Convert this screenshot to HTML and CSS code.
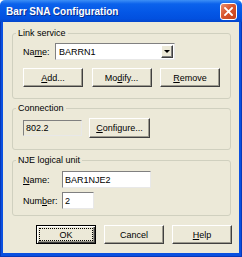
FILE: index.html
```html
<!DOCTYPE html>
<html lang="en">
<head>
  <meta charset="UTF-8" />
  <title>Barr SNA Configuration</title>
  <link rel="stylesheet" href="styles.css">
</head>
<body>

  <div class="window">
    <div class="titlebar">
      <span class="title">Barr SNA Configuration</span>
      <div class="close">
        <svg width="9" height="9" viewBox="0 0 9 9"><path d="M1 1 L8 8 M8 1 L1 8" stroke="#fff" stroke-width="1.8" stroke-linecap="square"/></svg>
      </div>
    </div>

    <div class="frame">
      <div class="client">

        <fieldset class="group group-link">
          <legend>Link service</legend>
          <div class="row">
            <span class="label">Na<u>m</u>e:</span>
            <div class="combo">
              <span class="combo-text">BARRN1</span>
              <div class="drop"><span class="tri"></span></div>
            </div>
          </div>
          <div class="row buttons">
            <div class="btn"><u>A</u>dd...</div>
            <div class="btn">Mo<u>d</u>ify...</div>
            <div class="btn"><u>R</u>emove</div>
          </div>
        </fieldset>

        <fieldset class="group group-conn">
          <legend>Connection</legend>
          <div class="row conn">
            <div class="edit static">802.2</div>
            <div class="btn btn-wide"><u>C</u>onfigure...</div>
          </div>
        </fieldset>

        <fieldset class="group group-nje">
          <legend>NJE logical unit</legend>
          <div class="row">
            <span class="label label-nje"><u>N</u>ame:</span>
            <div class="edit edit-name">BAR1NJE2</div>
          </div>
          <div class="row row-num">
            <span class="label label-nje">Num<u>b</u>er:</span>
            <div class="edit edit-num">2</div>
          </div>
        </fieldset>

        <div class="actions">
          <div class="btn btn-default"><span class="focus">OK</span></div>
          <div class="btn">Cancel</div>
          <div class="btn"><u>H</u>elp</div>
        </div>

      </div>
    </div>
  </div>

</body>
</html>
```

FILE: styles.css
```css
body {
        margin: 0;
        padding: 0;
        background: #fff;
        font-family: "Liberation Sans", Arial, sans-serif;
        font-size: 9px;
        color: #000;
    }
    u {
        text-decoration-thickness: 1px;
        text-underline-offset: 1px;
    }
    .window {
        width: 242px;
        height: 257px;
        display: flex;
        flex-direction: column;
    }
    .titlebar {
        height: 22px;
        flex: none;
        display: flex;
        align-items: center;
        justify-content: space-between;
        padding: 0 5px 0 6px;
        border-radius: 5px 5px 0 0;
        background: linear-gradient(#3d8ff6 0%, #0b62ec 18%, #0457e6 55%, #0250df 85%, #0446cc 100%);
        color: #fff;
        font-weight: bold;
        font-size: 10px;
    }
    .title {
        padding-top: 1px;
        text-shadow: 1px 1px #0a2f8f;
    }
    .close {
        width: 15px;
        height: 15px;
        border: 1px solid #fff;
        border-radius: 3px;
        background: linear-gradient(135deg, #e88f70, #d9552d 45%, #c3421c);
        display: flex;
        align-items: center;
        justify-content: center;
    }
    .frame {
        flex: 1;
        display: flex;
        padding: 0 3px 4px;
        background: #0a50e0;
        box-shadow: inset 1px 0 #0838b8, inset -1px 0 #0838b8, inset 0 -1px #0838b8;
    }
    .client {
        flex: 1;
        background: #ece9d8;
        padding-top: 6px;
    }
    .group {
        margin: 0 8px 0 9px;
        padding: 4px 10px 11px;
        border: 1px solid #d0d0bf;
        border-radius: 3px;
        min-width: 0;
    }
    legend {
        padding: 0 2px;
        margin-left: -7px;
        line-height: 11px;
    }
    .group-conn {
        margin-top: 4px;
    }
    .group-nje {
        margin-top: 5px;
        padding-top: 5px;
        padding-bottom: 6px;
    }
    .row {
        display: flex;
        align-items: center;
    }
    .label {
        width: 32px;
        flex: none;
    }
    .label-nje {
        width: 39px;
    }
    .combo {
        width: 120px;
        height: 17px;
        box-sizing: border-box;
        background: #fff;
        border: 1px solid;
        border-color: #808080 #e8e8e8 #e8e8e8 #808080;
        display: flex;
        align-items: center;
        justify-content: space-between;
        padding: 0 1px 0 3px;
    }
    .drop {
        width: 12px;
        height: 13px;
        box-sizing: border-box;
        background: #ece9d8;
        border: 1px solid;
        border-color: #fff #404040 #404040 #fff;
        box-shadow: inset -1px -1px #808080;
        display: flex;
        align-items: center;
        justify-content: center;
    }
    .tri {
        width: 0;
        height: 0;
        border-left: 3px solid transparent;
        border-right: 3px solid transparent;
        border-top: 3px solid #000;
    }
    .buttons {
        margin-top: 8px;
        gap: 8.5px;
    }
    .btn {
        width: 60px;
        height: 19px;
        box-sizing: border-box;
        flex: none;
        background: #ece9d8;
        border: 1px solid;
        border-color: #fff #404040 #404040 #fff;
        box-shadow: inset -1px -1px #9d9b8f;
        display: flex;
        align-items: center;
        justify-content: center;
    }
    .btn-wide {
        width: 61px;
        height: 20px;
    }
    .edit {
        height: 17px;
        box-sizing: border-box;
        background: #fff;
        border: 1px solid;
        border-color: #808080 #e8e8e8 #e8e8e8 #808080;
        display: flex;
        align-items: center;
        padding-left: 2px;
    }
    .static {
        width: 59px;
        height: 16px;
        background: #ece9d8;
    }
    .conn {
        gap: 7px;
    }
    .edit-name {
        width: 89px;
    }
    .edit-num {
        width: 32px;
    }
    .row-num {
        margin-top: 4px;
    }
    .actions {
        display: flex;
        justify-content: flex-end;
        gap: 8px;
        padding-right: 7px;
        margin-top: 9px;
    }
    .btn-default {
        border: 1px solid #000;
        box-shadow: inset 1px 1px #fff, inset -1px -1px #404040, inset -2px -2px #9d9b8f;
        padding: 3px;
    }
    .focus {
        flex: 1;
        align-self: stretch;
        display: flex;
        align-items: center;
        justify-content: center;
        outline: 1px dotted #000;
    }
```
